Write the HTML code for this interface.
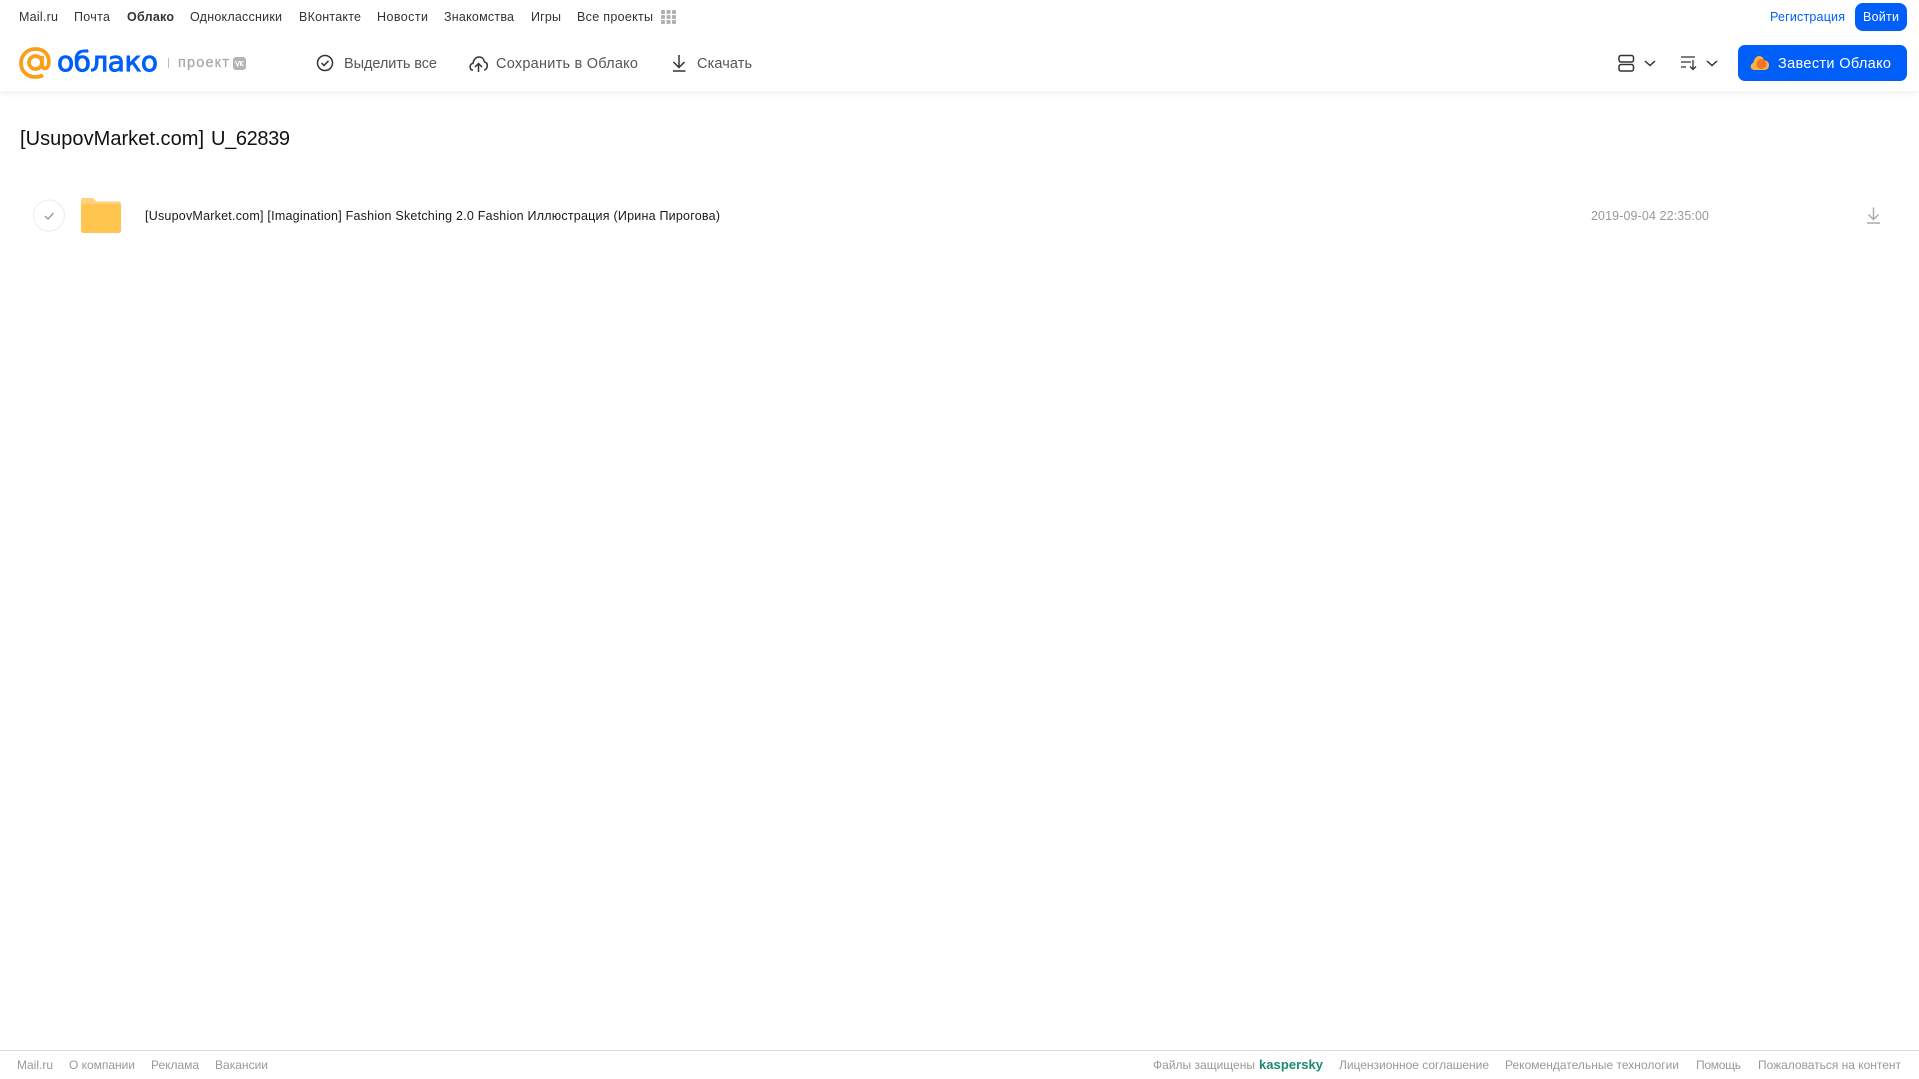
<!DOCTYPE html>
<html lang="ru">
<head>
<meta charset="utf-8">
<title>[UsupovMarket.com] U_62839</title>
<style>
html,body{margin:0;padding:0;width:1919px;height:1079px;overflow:hidden;background:#fff}
.hdr{position:absolute;left:0;top:0;width:1919px;height:91px;background:#fff;box-shadow:0 2px 6px rgba(0,0,0,.07)}
svg{position:absolute;left:0;top:0}
text{font-family:"Liberation Sans","Noto Sans CJK SC",sans-serif}
.n{font-size:12.5px;fill:#333}
.t{font-size:14.5px;fill:#555}
.f{font-size:12px;fill:#999}
</style>
</head>
<body>
<div class="hdr"></div>
<svg width="1919" height="1079" viewBox="0 0 1919 1079" xmlns="http://www.w3.org/2000/svg">
  <!-- top nav -->
  <text class="n" x="19" y="21" textLength="39">Mail.ru</text>
  <text class="n" x="74" y="21" textLength="36">Почта</text>
  <text class="n" x="127" y="21" textLength="47" font-weight="700">Облако</text>
  <text class="n" x="190" y="21" textLength="92">Одноклассники</text>
  <text class="n" x="299" y="21" textLength="62">ВКонтакте</text>
  <text class="n" x="377" y="21" textLength="51">Новости</text>
  <text class="n" x="444" y="21" textLength="70">Знакомства</text>
  <text class="n" x="531" y="21" textLength="30">Игры</text>
  <text class="n" x="577" y="21" textLength="76">Все проекты</text>
  <g fill="#b0b0b0">
    <rect x="661" y="10" width="4" height="4" rx="1"/><rect x="666.500" y="10" width="4" height="4" rx="1"/><rect x="672" y="10" width="4" height="4" rx="1"/>
    <rect x="661" y="15" width="4" height="4" rx="1"/><rect x="666.500" y="15" width="4" height="4" rx="1"/><rect x="672" y="15" width="4" height="4" rx="1"/>
    <rect x="661" y="20" width="4" height="4" rx="1"/><rect x="666.500" y="20" width="4" height="4" rx="1"/><rect x="672" y="20" width="4" height="4" rx="1"/>
  </g>
  <text x="1770" y="21" textLength="75" font-size="12.5" fill="#005ff9">Регистрация</text>
  <rect x="1855" y="3" width="52" height="28" rx="8" fill="#005ff9"/>
  <text x="1863" y="21" textLength="36" font-size="12.5" fill="#fff">Войти</text>

  <!-- logo -->
  <g fill="none" stroke="#f9a01b" stroke-width="3.800">
    <circle cx="35.500" cy="62.500" r="6.500"/>
    <path d="M42 56V65C42 69.500 47.500 69.500 48.500 65C50.500 55 44 49 35.500 49C27 49 21 55.500 21 63C21 71 27 77 35.500 77C38.500 77 41 76.300 43 75"/>
  </g>
  <text x="57" y="71" textLength="101" font-size="28" fill="#005ff9" stroke="#005ff9" stroke-width=".9" style="font-family:'DejaVu Sans',sans-serif">облако</text>
  <rect x="168" y="58" width="1" height="10" fill="#bbb"/>
  <text x="178" y="67" textLength="51" font-size="14.500" fill="#aaa" stroke="#aaa" stroke-width=".3">проект</text>
  <rect x="233" y="57" width="13" height="13" rx="3" fill="#b4b4b4"/>
  <path d="M235.500 61L237.500 66L239.500 61M240.500 61V66M243.500 61L240.800 63.500L243.500 66" fill="none" stroke="#fff" stroke-width="1.100"/>

  <!-- toolbar -->
  <circle cx="325" cy="63" r="7.500" fill="none" stroke="#333" stroke-width="1.500"/>
  <path d="M321.500 63L324 65.500L328.500 60.800" fill="none" stroke="#333" stroke-width="1.500"/>
  <text class="t" x="344" y="68" textLength="93">Выделить все</text>

  <path d="M473 70H472.500C470 70 469.800 66.500 470.500 65C471 64 472 63.500 473 63.300C473.500 59.500 476 57 479 57C482 57 484 59 484.500 62C486.500 62.500 487.500 64 487.300 66C487 68.500 485.500 70 484 70" fill="none" stroke="#333" stroke-width="1.500"/>
  <path d="M478.500 72V63.500M475 67L478.500 63.500L482 67" fill="none" stroke="#333" stroke-width="1.500"/>
  <text class="t" x="496" y="68" textLength="142">Сохранить в Облако</text>

  <path d="M679 55V67M673.500 62L679 67.500L684.500 62M673 71H685.500" fill="none" stroke="#333" stroke-width="1.500"/>
  <text class="t" x="697" y="68" textLength="55">Скачать</text>

  <!-- view / sort -->
  <g fill="none" stroke="#333" stroke-width="1.500">
    <rect x="1619" y="55.500" width="14.500" height="6.500" rx="2"/>
    <rect x="1619" y="64.500" width="14.500" height="6.500" rx="2"/>
    <path d="M1645 61L1650 65.500L1655 61"/>
    <path d="M1681 57H1695M1681 62H1691M1681 67H1686" stroke-width="1.300"/>
    <path d="M1693 60V69M1690 66.500L1693 69.500L1696 66.500" stroke-width="1.300"/>
    <path d="M1707 61L1712 65.500L1717 61"/>
  </g>
  <rect x="1738" y="45" width="169" height="36" rx="7" fill="#005ff9"/>
  <path d="M1755 70C1751.500 70 1750 67.500 1751 65C1751.500 63.500 1753 63 1753.500 62.500C1754 59.500 1756 56 1759 56C1762 56 1763.500 58 1764 60C1767.500 60.500 1769.500 63 1769 66C1768.500 68.500 1767 70 1764 70Z" fill="#ffb13d"/>
  <circle cx="1761.500" cy="64" r="5" fill="#f4732a"/>
  <text x="1778" y="68" textLength="113" font-size="14.500" fill="#fff">Завести Облако</text>

  <!-- title -->
  <text x="20" y="145" textLength="184" font-size="20" fill="#111">[UsupovMarket.com]</text>
  <text x="211" y="145" textLength="79" font-size="20" fill="#111">U_62839</text>

  <!-- row -->
  <circle cx="49" cy="215.500" r="15.500" fill="#fff" stroke="#ececec" stroke-width="1"/>
  <path d="M45 216L48 219L53.500 213" fill="none" stroke="#999" stroke-width="1.400"/>
  <path d="M81 201C81 199 82 198 84 198H91.500C93.500 198 94.500 199 96 201.500H118C120 201.500 121 202.500 121 204.500V230C121 232 120 233 118 233H84C82 233 81 232 81 230Z" fill="#ffd27a"/>
  <path d="M81 206.500C81 205 82 204 84 204H118C120 204 121 205 121 206.500V230C121 232 120 233 118 233H84C82 233 81 232 81 230Z" fill="#ffc54f"/>
  <text x="145" y="220" textLength="575" font-size="12.500" fill="#1a1a1a">[UsupovMarket.com] [Imagination] Fashion Sketching 2.0 Fashion Иллюстрация (Ирина Пирогова)</text>
  <text x="1591" y="220" textLength="118" font-size="12.500" fill="#999">2019-09-04 22:35:00</text>
  <path d="M1873.500 207.500V219.500M1868.500 214.500L1873.500 219.500L1878.500 214.500M1867 223H1880" fill="none" stroke="#aaa" stroke-width="1.400"/>

  <!-- footer -->
  <rect x="0" y="1050" width="1919" height="1" fill="#dcdcdc"/>
  <text class="f" x="17" y="1069" textLength="36">Mail.ru</text>
  <text class="f" x="69" y="1069" textLength="66">О компании</text>
  <text class="f" x="151" y="1069" textLength="48">Реклама</text>
  <text class="f" x="215" y="1069" textLength="53">Вакансии</text>
  <text class="f" x="1153" y="1069" textLength="102">Файлы защищены</text>
  <text x="1259" y="1069" textLength="64" font-size="13" font-weight="700" fill="#1a8a72">kaspersky</text>
  <text class="f" x="1339" y="1069" textLength="150">Лицензионное соглашение</text>
  <text class="f" x="1505" y="1069" textLength="174">Рекомендательные технологии</text>
  <text class="f" x="1696" y="1069" textLength="45">Помощь</text>
  <text class="f" x="1758" y="1069" textLength="143">Пожаловаться на контент</text>
</svg>
</body>
</html>
